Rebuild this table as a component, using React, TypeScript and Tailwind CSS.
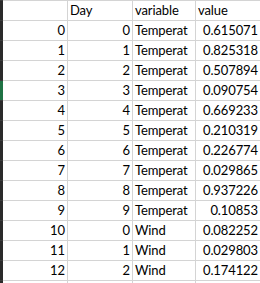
const rows: [number, number, string, string][] = [
  [0, 0, 'Temperat', '0.615071'],
  [1, 1, 'Temperat', '0.825318'],
  [2, 2, 'Temperat', '0.507894'],
  [3, 3, 'Temperat', '0.090754'],
  [4, 4, 'Temperat', '0.669233'],
  [5, 5, 'Temperat', '0.210319'],
  [6, 6, 'Temperat', '0.226774'],
  [7, 7, 'Temperat', '0.029865'],
  [8, 8, 'Temperat', '0.937226'],
  [9, 9, 'Temperat', '0.10853'],
  [10, 0, 'Wind', '0.082252'],
  [11, 1, 'Wind', '0.029803'],
  [12, 2, 'Wind', '0.174122'],
]

const cell = 'h-[20px] border-t border-[#d4d4d4] flex items-end pb-[2px] px-[2px] overflow-hidden whitespace-nowrap'

function Row({ cells, active }: { cells: { text: string; right?: boolean }[]; active?: boolean }) {
  return (
    <div className="flex">
      <div className={`w-[3px] h-[20px] shrink-0 border-t border-[#3c3c3c] ${active ? 'bg-[#1f7244]' : 'bg-[#2a2a2a]'}`} />
      <div className={`${cell} w-[65px] shrink-0 border-r justify-end`}>{cells[0].text}</div>
      <div className={`${cell} w-[65px] shrink-0 border-r justify-end`}>{cells[1].text}</div>
      <div className={`${cell} w-[63px] shrink-0 border-r justify-start`}>{cells[2].text}</div>
      <div className={`${cell} w-[64px] shrink-0 ${cells[3].right ? 'justify-end' : 'justify-start'}`}>{cells[3].text}</div>
    </div>
  )
}

export default function App() {
  return (
    <div
      className="w-[260px] h-[283px] overflow-hidden bg-white text-black text-[13px] tracking-[-0.1px] leading-[15px]"
      style={{ fontFamily: 'Lato, "Open Sans", sans-serif' }}
    >
      <div className="flex">
        <div className="w-[3px] h-[20px] shrink-0 border-t border-[#3c3c3c] bg-[#2a2a2a]" />
        <div className={`${cell} w-[65px] shrink-0 border-r`} />
        <div className={`${cell} w-[65px] shrink-0 border-r`}>Day</div>
        <div className={`${cell} w-[63px] shrink-0 border-r`}>variable</div>
        <div className={`${cell} w-[64px] shrink-0`}>value</div>
      </div>
      {rows.map((r) => (
        <Row
          key={r[0]}
          active={r[0] === 3}
          cells={[
            { text: String(r[0]) },
            { text: String(r[1]) },
            { text: r[2] },
            { text: r[3], right: true },
          ]}
        />
      ))}
      <Row cells={[{ text: '' }, { text: '' }, { text: '' }, { text: '' }]} />
    </div>
  )
}
